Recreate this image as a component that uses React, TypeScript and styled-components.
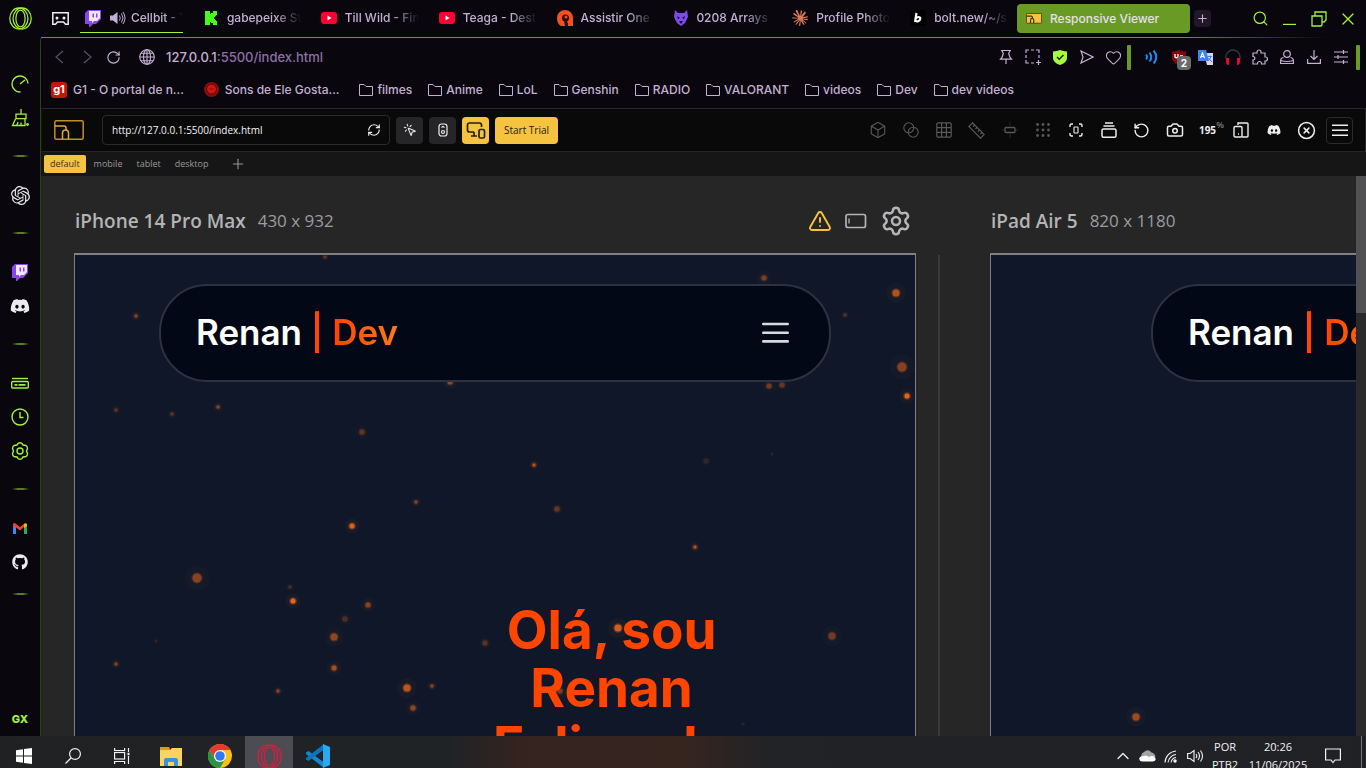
import React from "react";
import styled, { createGlobalStyle, css } from "styled-components";
import {
  Search, X, Plus, RotateCw, Heart,
  RefreshCw, MousePointerClick, Box, RotateCcw, Camera, CircleX, TriangleAlert, Settings,
  ChevronUp,
} from "lucide-react";
import { FaDiscord, FaGithub } from "react-icons/fa6";
import { SiOpenai, SiClaude } from "react-icons/si";

const ui = `Inter, "Liberation Sans", sans-serif`;
const segoe = `"Open Sans", "Noto Sans", sans-serif`;
const c = {
  chrome: "#09070d",
  green: "#6a9a26",
  lime: "#a3f13b",
  lilac: "#c4b0d4",
  dim: "#5a5162",
  yellow: "#f5c33f",
  canvas: "#262627",
  orange: "#ff4500",
};

const Global = createGlobalStyle`
  *, *::before, *::after { box-sizing: border-box; }
  body { margin: 0; background: ${c.chrome}; overflow: hidden; }
  button { font: inherit; color: inherit; background: none; border: 0; padding: 0; }
  svg { display: block; flex: none; }
`;

const Desktop = styled.div`
  height: 100vh;
  display: flex;
  flex-direction: column;
  overflow: hidden;
  background: ${c.chrome};
  color: ${c.lilac};
  font-family: ${ui};
  font-size: 12px;
  font-weight: 500;
`;

/* ---------- title bar ---------- */
const TitleBar = styled.header`
  flex: none;
  height: 37px;
  display: flex;
  align-items: center;
`;
const Square = styled.button<{ $w?: number; $h?: number }>`
  flex: none;
  width: ${(p) => p.$w ?? 27}px;
  height: ${(p) => p.$h ?? 27}px;
  display: flex;
  align-items: center;
  justify-content: center;
`;
const TabStrip = styled.nav`
  flex: 1;
  min-width: 0;
  height: 37px;
  display: flex;
`;
const Tab = styled.button<{ $current?: boolean }>`
  flex: 1 1 0;
  min-width: 0;
  height: 33px;
  margin-right: 9px;
  padding: 4px 0 0 ${(p) => (p.$current ? 5 : 11)}px;
  display: flex;
  align-items: center;
  gap: 8px;
  border-bottom: 1px solid ${(p) => (p.$current ? c.lime : "transparent")};
  svg + svg { margin-left: 1px; margin-right: -3px; }
`;
const TabTitle = styled.span`
  flex: 1;
  min-width: 0;
  overflow: hidden;
  white-space: nowrap;
  text-align: left;
  line-height: 20px;
  mask-image: linear-gradient(90deg, #000 65%, transparent 100%);
`;
const ActiveTab = styled.button`
  flex: none;
  width: 173px;
  height: 29px;
  padding-left: 9px;
  display: flex;
  align-items: center;
  gap: 8px;
  border-radius: 4px;
  background: ${c.green};
  color: #e6e0ea;
`;
const NewTab = styled(Square)`
  margin: 0 35px 0 4px;
  border-radius: 4px;
  background: #221629;
`;
const WindowButtons = styled.div`
  display: flex;
  color: ${c.lime};
  padding-right: 4px;
`;

/* ---------- frame ---------- */
const Body = styled.div`
  flex: 1;
  min-height: 0;
  display: flex;
`;
const Sidebar = styled.aside`
  flex: none;
  width: 40px;
  padding-top: 30px;
  display: flex;
  flex-direction: column;
  align-items: center;
  color: ${c.lime};
`;
const SideSeparator = styled.hr<{ $last?: boolean }>`
  flex: none;
  width: 17px;
  height: 2px;
  margin: ${(p) => (p.$last ? 14 : 20)}px 0 21px;
  border: 0;
  background: linear-gradient(90deg, transparent, #587f22 35%, #587f22 65%, transparent);
`;
const GxMark = styled(Square)`
  margin-top: auto;
  font-size: 11px;
  font-weight: 800;
`;
const Window = styled.main`
  flex: 1;
  min-width: 0;
  display: flex;
  flex-direction: column;
  position: relative;
  border-left: 1px solid #2c4018;
  border-top-left-radius: 4px;
  &::before {
    content: "";
    flex: none;
    height: 1px;
    background: linear-gradient(90deg, ${c.green} 86%, transparent 97%);
  }
`;
const AddressRow = styled.div`
  flex: none;
  height: 38px;
  display: flex;
  align-items: center;
  padding: 0 6px 0 5px;
`;
const Address = styled.button`
  flex: 1;
  min-width: 0;
  display: flex;
  align-items: center;
  gap: 11px;
  padding-left: 12px;
  font-size: 13px;
  line-height: 20px;
  text-align: left;
  span span { color: #8d6fa8; }
`;
const GreenBar = styled.i`
  flex: none;
  width: 4px;
  height: 25px;
  margin-right: 7px;
  border-radius: 1px;
  background: ${c.green};
  &:last-child { margin: 0 0 0 2px; }
`;
const WithBadge = styled(Square)`
  position: relative;
`;
const Badge = styled.span`
  position: absolute;
  right: 1px;
  bottom: 1px;
  width: 14px;
  height: 14px;
  border-radius: 4px;
  background: #6a6a6c;
  color: #fff;
  font-size: 10px;
  font-weight: 700;
  line-height: 14px;
  text-align: center;
`;
const Bookmarks = styled.nav`
  flex: none;
  height: 32px;
  padding: 0 0 5px 10px;
  display: flex;
  align-items: center;
  gap: 16px;
  overflow: hidden;
`;
const Bookmark = styled.a<{ $site?: boolean }>`
  display: flex;
  align-items: center;
  gap: 4px;
  line-height: 20px;
  white-space: nowrap;
  color: inherit;
  text-decoration: none;
  ${(p) => p.$site && css`gap: 6px; margin-right: 4px;`}
`;
const G1 = styled.span`
  width: 16px;
  height: 16px;
  border-radius: 3px;
  background: #c4170c;
  color: #fff;
  font-size: 11px;
  font-weight: 700;
  line-height: 15px;
  text-align: center;
`;

/* ---------- viewer extension ---------- */
const ViewerBar = styled.div`
  flex: none;
  height: 44px;
  padding: 0 12px 0 12px;
  display: flex;
  align-items: center;
  gap: 6px;
  border: 1px solid #262627;
  border-left-color: #131313;
  background: #09090a;
  color: #ededee;
  font-family: ${segoe};
`;
const UrlBox = styled.label`
  width: 288px;
  height: 30px;
  margin-left: 12px;
  padding: 0 8px 0 9px;
  display: flex;
  align-items: center;
  border: 1px solid #2a2a2c;
  border-radius: 4px;
`;
const UrlInput = styled.input`
  flex: 1;
  min-width: 0;
  padding: 0;
  border: 0;
  outline: 0;
  background: none;
  color: #f4f4f5;
  font: 500 10px/16px ${segoe};
`;
const Tool = styled(Square)<{ $tone?: "grey" | "yellow" | "line"; $dim?: boolean }>`
  border-radius: 4px;
  color: ${(p) => (p.$dim ? "#58585a" : "#ededee")};
  ${(p) => p.$tone === "grey" && css`background: #262628;`}
  ${(p) => p.$tone === "yellow" && css`background: ${c.yellow}; color: #26221a;`}
  ${(p) => p.$tone === "line" && css`border: 1px solid #2a2a2c;`}
`;
const Trial = styled(Tool)`
  font-size: 10px;
  font-weight: 500;
`;
const Tools = styled.div`
  margin-left: auto;
  display: flex;
  gap: 6px;
`;
const Zoom = styled(Tool)`
  font-size: 10px;
  font-weight: 700;
  sup {
    width: 8px;
    margin: 3px -8px 0 0;
    align-self: flex-start;
    font-size: 9px;
    line-height: 9px;
    font-weight: 600;
    color: #7a7a7c;
  }
`;
const Presets = styled.nav`
  flex: none;
  height: 24px;
  padding: 0 0 0 3px;
  display: flex;
  align-items: center;
  gap: 2px;
  background: #161617;
  color: #98989b;
  font: 500 9px/18px ${segoe};
`;
const Preset = styled.button<{ $on?: boolean }>`
  height: 18px;
  padding: 0 6px;
  border-radius: 2px;
  ${(p) => p.$on && css`background: ${c.yellow}; color: #3a3220;`}
`;
const AddPreset = styled(Preset)`
  padding-left: 14px;
`;
const Stage = styled.div`
  flex: 1;
  min-height: 0;
  display: flex;
  background: ${c.canvas};
`;
const Devices = styled.div`
  flex: 1;
  min-width: 0;
  display: flex;
  padding-left: 33px;
  overflow: hidden;
`;
const ScrollTrack = styled.div`
  flex: none;
  width: 10px;
  background: #2a2a2b;
  &::before {
    content: "";
    display: block;
    height: 137px;
    background: #515153;
  }
`;
const Divider = styled.div`
  flex: none;
  width: 2px;
  margin: 79px 50px 0 22px;
  background: #3a3a3c;
`;
const Device = styled.section<{ $w: number }>`
  flex: none;
  width: ${(p) => p.$w}px;
  display: flex;
  flex-direction: column;
`;
const DeviceHead = styled.div`
  flex: none;
  height: 77px;
  padding: 12px 4px 0 1px;
  display: flex;
  align-items: center;
  gap: 12px;
  color: #b4b4b6;
  font-family: ${segoe};
`;
const DeviceName = styled.h2`
  margin: 0;
  font-size: 19px;
  line-height: 28px;
  font-weight: 600;
`;
const DeviceSize = styled.span`
  flex: 1;
  font-size: 17px;
  line-height: 28px;
  font-weight: 400;
  color: #9c9ca0;
`;
const HeadIcons = styled.div`
  display: flex;
  align-items: center;
  gap: 13px;
`;
const Screen = styled.div`
  flex: 1;
  min-height: 0;
  position: relative;
  border: 1px solid #808082;
  border-top-width: 2px;
  border-bottom: 0;
  background: #0f1729;
  overflow: hidden;
  font-family: ${ui};
`;
const Sparks = styled.svg`
  position: absolute;
  left: 0;
  top: 0;
  width: 100%;
  height: 100%;
`;
const SiteHeader = styled.header`
  position: relative;
  margin: 29px 10% 0;
  height: 98px;
  padding: 0 40px 2px 35px;
  display: flex;
  align-items: center;
  justify-content: space-between;
  border: 2px solid #2e3140;
  border-radius: 48px;
  background: #030817;
`;
const Brand = styled.a`
  font-size: 35px;
  line-height: 44px;
  font-weight: 600;
  color: #fff;
  text-decoration: none;
  white-space: nowrap;
  span {
    color: transparent;
    background: linear-gradient(90deg, ${c.orange} 30%, #ff7a1a);
    background-clip: text;
  }
`;
const Hero = styled.h1`
  position: relative;
  margin: 219px 0 0;
  padding: 0 2px 0 28%;
  color: ${c.orange};
  font-size: 53px;
  line-height: 58px;
  font-weight: 700;
  text-align: center;
  span { display: block; }
`;

/* ---------- taskbar ---------- */
const Taskbar = styled.footer`
  flex: none;
  height: 32px;
  display: flex;
  align-items: flex-start;
  overflow: hidden;
  background: linear-gradient(90deg, #202123 0, #202326 33%, #34231f 38%, #36241f 50%, #222326 56%, #202125 100%);
  color: #f2f2f2;
  font: 12px/18px ${segoe};
`;
const TaskButton = styled(Square)<{ $on?: boolean }>`
  margin-right: 1px;
  background: ${(p) => (p.$on ? "#4c4d52" : "none")};
`;
const Tray = styled.div`
  margin-left: auto;
  height: 40px;
  display: flex;
  align-items: center;
`;
const TrayText = styled.div<{ $w: number }>`
  width: ${(p) => p.$w}px;
  font-size: 11px;
  text-align: center;
  div { height: 18px; }
`;
const ShowDesktop = styled.i`
  width: 5px;
  height: 40px;
  margin-left: 8px;
  border-left: 1px solid #77787a;
`;

/* ---------- drawings ---------- */
type LineProps = { s?: number; h?: number; vb?: string; sw?: number; children: React.ReactNode };
const Line = ({ s = 18, h, vb = "0 0 18 18", sw = 1, children }: LineProps) => (
  <svg width={s} height={h ?? s} viewBox={vb} fill="none" stroke="currentColor" strokeWidth={sw} aria-hidden>
    {children}
  </svg>
);
const OperaRing = ({ s, color, sw }: { s: number; color: string; sw: number }) => (
  <svg width={s} height={s} viewBox="0 0 24 24" fill="none" stroke={color} strokeWidth={sw} aria-hidden>
    <ellipse cx="10.300" cy="12" rx="9.500" ry="11" />
    <ellipse cx="13.700" cy="12" rx="9.500" ry="11" />
    <ellipse cx="12" cy="12" rx="4.800" ry="8.800" />
  </svg>
);
const TwitchLogo = () => (
  <svg width="16" height="18" viewBox="0 0 16 18" aria-hidden>
    <path d="M3 1h13v9l-5 5H8l-3 3H4v-3H0V4z" fill="#8b45f0" />
    <path d="M4 2h11v7l-3 3H9l-2 2v-2H4z" fill="#efe8f8" />
    <path d="M7.500 4.500h1.500v4H7.500zM11 4.500h1.500v4H11z" fill="#8b45f0" />
  </svg>
);
const YouTubeLogo = () => (
  <svg width="16" height="16" viewBox="0 0 16 16" aria-hidden>
    <rect y="2" width="16" height="12" rx="3" fill="#ff0033" />
    <path d="M6.500 5.500v5l4-2.500z" fill="#fff" />
  </svg>
);
const KickLogo = () => (
  <svg width="16" height="16" viewBox="0 0 16 16" aria-hidden>
    <rect width="16" height="16" fill="#080b08" />
    <path d="M2 1h5v3h1V3h2V1h4v4h-1v1h-1v1h-1v2h1v1h1v1h1v4h-4v-2H8v-1H7v3H2z" fill="#45fc16" />
  </svg>
);
const AnimeLogo = () => (
  <svg width="16" height="16" viewBox="0 0 16 16" aria-hidden>
    <path d="M0 8a8 8 0 0 1 16 0v8h-5v-3a6 6 0 0 1-8 2.500C1 14 0 11 0 8z" fill="#f4511e" />
    <circle cx="8.500" cy="8" r="3.500" fill="#2b0d06" />
    <circle cx="9" cy="7" r="1.500" fill="#f4511e" />
    <path d="M7 10l3 0 1 6H8z" fill="#2b0d06" />
  </svg>
);
const CatLogo = () => (
  <svg width="14" height="16" viewBox="0 0 14 16" aria-hidden>
    <path d="M1 0l3 3h6l3-3 1 7-3 6-4 3-4-3-3-6z" fill="#7c4be8" />
    <path d="M3 6l3 2-2 1zM11 6L8 8l2 1zM5 11h4l-2 3z" fill="#160b2c" />
  </svg>
);
const BoltLogo = () => (
  <svg width="16" height="16" viewBox="0 0 16 16" aria-hidden>
    <rect width="16" height="16" rx="3" fill="#000" />
    <path d="M6.500 3L5 12M6 8.500c1-2 4.500-2 4.300 0-.2 3-3.800 3.500-5 2" stroke="#fff" strokeWidth="2.200" fill="none" />
  </svg>
);
const ViewerLogo = ({ w, solid }: { w: number; solid?: boolean }) => (
  <svg width={w} height={(w * 2) / 3} viewBox="0 0 30 20" aria-hidden>
    <rect x=".8" y=".8" width="28.400" height="18.400" rx="1.500" fill={solid ? c.yellow : "none"} stroke={solid ? "#3f350f" : "#c08f2a"} strokeWidth="1.500" />
    <path d="M1 6h9q2 0 2 2v2M8.500 19v-6q0-3 3-3t3 3v6" fill="none" stroke={solid ? "#3f350f" : "#e0a92f"} strokeWidth={solid ? 2.2 : 1.5} />
  </svg>
);
const Folder = () => (
  <Line s={14} vb="0 0 14 14" sw={1}>
    <path d="M.5 12.500V1.500h4.500l2 2h6.500v9z" />
  </Line>
);
const Speaker = () => (
  <svg width="16" height="14" viewBox="0 0 16 14" aria-hidden>
    <path d="M0 4.500h3L7.500 1v12L3 9.500H0z" fill={c.lilac} />
    <path d="M9.500 4.500q1.500 2.500 0 5M11.500 2.500q3 4.500 0 9M13 1q4 6 0 12" fill="none" stroke={c.lilac} />
  </svg>
);

type Dot = [number, number, number, number];
const phoneDots: Dot[] = [
  [250, 2, 2, 0.4], [689, 23, 3, 0.5], [821, 38, 4, 0.75], [770, 60, 2, 0.35], [61, 61, 2, 0.6], [827, 112, 5, 0.55],
  [832, 141, 3, 1], [694, 131, 3, 0.45], [707, 130, 3, 0.4], [375, 127, 3, 0.6], [41, 155, 2, 0.4], [97, 159, 2, 0.4],
  [143, 152, 2, 0.6], [287, 177, 3, 0.4], [631, 206, 3, 0.18], [697, 199, 1, 0.3], [459, 210, 2, 0.8], [341, 247, 2, 0.6],
  [482, 254, 3, 0.4], [277, 271, 3, 0.95], [620, 292, 2, 0.8], [122, 323, 5, 0.55], [215, 332, 2, 0.3], [218, 346, 3, 1],
  [293, 350, 3, 0.55], [270, 364, 3, 0.3], [259, 382, 4, 0.6], [81, 386, 1, 0.3], [41, 409, 2, 0.55], [259, 413, 3, 0.7],
  [203, 436, 2, 0.6], [410, 388, 3, 0.35], [332, 433, 4, 0.8], [357, 431, 2, 0.6], [338, 453, 3, 0.6], [543, 373, 4, 0.9],
  [485, 436, 3, 0.5], [757, 381, 4, 0.45], [668, 469, 1, 0.3],
];
const padDots: Dot[] = [[145, 462, 4, 0.65]];
const SparkField = ({ dots }: { dots: Dot[] }) => (
  <Sparks aria-hidden>
    {dots.map(([x, y, r, o]) => (
      <g key={`${x}-${y}`} fill="#ff6f1a" opacity={o}>
        <circle cx={x} cy={y} r={r * 2.5} opacity=".05" />
        <circle cx={x} cy={y} r={r + 0.8} opacity=".3" />
        <circle cx={x} cy={y} r={r - 0.5} opacity=".85" />
      </g>
    ))}
  </Sparks>
);

const tabs: [React.ReactNode, string][] = [
  [<KickLogo />, "gabepeixe Stream"],
  [<YouTubeLogo />, "Till Wild - Final"],
  [<YouTubeLogo />, "Teaga - Destino"],
  [<AnimeLogo />, "Assistir One"],
  [<CatLogo />, "0208 Arrays"],
  [<SiClaude size={16} color="#d97757" />, "Profile Photo"],
  [<BoltLogo />, "bolt.new/~/sb1"],
];
const folders = ["filmes", "Anime", "LoL", "Genshin", "RADIO", "VALORANT", "videos", "Dev", "dev videos"];

export default function App() {
  return (
    <Desktop>
      <Global />
      <TitleBar>
        <Square $w={40} aria-label="Opera menu"><OperaRing s={23} color={c.lime} sw={1.3} /></Square>
        <Square $w={40} aria-label="Workspace">
          <svg width="17" height="13" viewBox="0 0 17 13" aria-hidden>
            <path d="M.8.800h15.400v11.400h-2.700L11.500 10h-6l-2 2.200H.8z" fill="none" stroke="#f0eef2" strokeWidth="1.500" />
            <circle cx="5" cy="6" r="1.500" fill="#f0eef2" /><circle cx="12" cy="6" r="1.500" fill="#f0eef2" />
          </svg>
        </Square>
        <TabStrip>
          <Tab $current><TwitchLogo /><Speaker /><TabTitle>Cellbit - Twitch</TabTitle></Tab>
          {tabs.map(([icon, title]) => <Tab key={title}>{icon}<TabTitle>{title}</TabTitle></Tab>)}
        </TabStrip>
        <ActiveTab><ViewerLogo w={16} solid />Responsive Viewer</ActiveTab>
        <NewTab $w={17} $h={17} aria-label="New tab"><Plus size={13} strokeWidth={2} /></NewTab>
        <WindowButtons>
          <Square $w={29} aria-label="Search tabs"><Search size={17} strokeWidth={1.7} /></Square>
          <Square $w={29} aria-label="Minimize"><Line s={13} vb="0 0 13 13" sw={1.2}><path d="M0 12.400h13" /></Line></Square>
          <Square $w={29} aria-label="Restore">
            <Line s={16} vb="0 0 16 16" sw={1.3}><path d="M1 5h10v9l-1 1H1zM4 5V1h11v8l-2 2h-2" /></Line>
          </Square>
          <Square $w={29} aria-label="Close"><X size={20} strokeWidth={1.6} /></Square>
        </WindowButtons>
      </TitleBar>

      <Body>
        <Sidebar>
          <Square $h={34} aria-label="Speed">
            <Line sw={1.4}><path d="M9.500 17A8 8 0 1 1 17 8.500M9 9l5-4" /></Line>
          </Square>
          <Square $h={34} aria-label="Cleaner">
            <Line sw={1.3}><path d="M10 0v5M5 5.200h10v4.500H5zM4.500 10L1.500 16.500H14V10M6 16l1-3M10 16v-2.500" /><circle cx="16.500" cy="15.500" r=".8" /></Line>
          </Square>
          <SideSeparator />
          <Square $h={34} aria-label="ChatGPT"><SiOpenai size={19} color="#e8e8ea" /></Square>
          <SideSeparator />
          <Square $h={34} aria-label="Twitch"><TwitchLogo /></Square>
          <Square $h={34} aria-label="Discord"><FaDiscord size={20} color="#ececee" /></Square>
          <SideSeparator />
          <Square $h={34} aria-label="Player">
            <Line sw={1.4}><path d="M1 4.500h16" /><rect x=".7" y="7.500" width="16.600" height="6.500" rx="1" /><path d="M3.500 10.800h3M7.500 10.800h7" strokeWidth="1.800" /></Line>
          </Square>
          <Square $h={34} aria-label="History">
            <Line sw={1.4}><circle cx="9" cy="9" r="8" /><path d="M9 4v5.500h3.500" /></Line>
          </Square>
          <Square $h={34} aria-label="Settings">
            <Line sw={1.4}><path d="M7 1.500q2-1.500 4 0l1 1.500 3 .5q1.500 1 1.500 3L15.500 9l1 2.500q0 2-1.500 3l-3 .5-1 1.500q-2 1.500-4 0L6 15l-3-.5q-1.500-1-1.500-3L2.500 9l-1-2.500q0-2 1.500-3L6 3z" /><circle cx="9" cy="9" r="3" /></Line>
          </Square>
          <SideSeparator />
          <Square $h={34} aria-label="Gmail">
            <svg width="14" height="11" viewBox="0 0 14 11" aria-hidden>
              <path d="M0 1.500h3V11H0z" fill="#4285f4" /><path d="M11 1.500h3V11h-3z" fill="#34a853" />
              <path d="M0 3V1q1-1.500 2.500-.5L7 4l4.500-3.500v3L7 7.500 3 4.500z" fill="#ea4335" /><path d="M11 1q2-1.500 3 .5V3l-3 2z" fill="#fbbc04" />
            </svg>
          </Square>
          <Square $h={34} aria-label="GitHub"><FaGithub size={16} color="#ececee" /></Square>
          <SideSeparator $last />
          <GxMark $h={34}>GX</GxMark>
        </Sidebar>

        <Window>
          <AddressRow>
            <Square aria-label="Back"><Line s={14} vb="0 0 14 14" sw={1.2}><path d="M10 1L3 7l7 6" stroke={c.dim} /></Line></Square>
            <Square aria-label="Forward"><Line s={14} vb="0 0 14 14" sw={1.2}><path d="M4 1l7 6-7 6" stroke={c.dim} /></Line></Square>
            <Square aria-label="Reload"><RotateCw size={15} strokeWidth={1.8} /></Square>
            <Address>
              <Line s={16} vb="0 0 16 16" sw={1.1}><circle cx="8" cy="8" r="7.300" /><ellipse cx="8" cy="8" rx="3.500" ry="7.300" /><path d="M8 .7v14.600M.7 8h14.600M2 4.300h12M2 11.700h12" /></Line>
              <span>127.0.0.1<span>:5500/index.html</span></span>
            </Address>
            <Square aria-label="Pin"><Line s={16} vb="0 0 16 16" sw={1.2}><path d="M3 1.500h10M4 1.500l1.300 3L4 8.500l-1.500 1.700h11L12 8.500l-1.300-4 1.300-3M8 10v5" /></Line></Square>
            <Square aria-label="Snapshot"><Line s={16} vb="0 0 16 16" sw={1.2}><path d="M1 4V1h3M6 1h3M11 1h3v3M14 6v3M1 6v3M1 11v3h3M6 14h3M13.500 11v5M11 13.500h5" /></Line></Square>
            <Square aria-label="Ad blocker">
              <svg width="14" height="15" viewBox="0 0 14 15" aria-hidden><path d="M0 1.500Q4 1 7 0q3 1 7 1.500V8q0 4.500-7 7Q0 12.500 0 8z" fill="#a6f93c" /><path d="M4 7l2.200 2.200L10.500 5" fill="none" stroke="#1a2a08" strokeWidth="1.500" /></svg>
            </Square>
            <Square aria-label="Send"><Line s={14} vb="0 0 14 14" sw={1.2}><path d="M1 1l12 6-12 6 2-6z" /></Line></Square>
            <Square aria-label="Favourite"><Heart size={17} strokeWidth={1.5} /></Square>
            <GreenBar />
            <Square aria-label="Volume booster">
              <Line s={14} vb="0 0 14 14" sw={2}><g stroke="#1a8cf0"><path d="M1 4.500q2 2.500 0 5M4.500 2.500q3.500 4.500 0 9M8.500.5q5.500 6.500 0 13" /></g></Line>
            </Square>
            <WithBadge aria-label="uBlock Origin">
              <svg width="14" height="15" viewBox="0 0 14 15" aria-hidden><path d="M0 1.500Q4 1.500 7 0q3 1.500 7 1.500V8q0 4.500-7 7Q0 12.500 0 8z" fill="#800610" /><path d="M3 4v3q1.500 1.500 3 0V4M8 6h3" fill="none" stroke="#fff" strokeWidth="1.300" /></svg>
              <Badge>2</Badge>
            </WithBadge>
            <Square aria-label="Translate">
              <svg width="15" height="15" viewBox="0 0 15 15" aria-hidden><path d="M6 3h9v12h-6z" fill="#d8dade" /><path d="M0 0h8l3 11H0z" fill="#3f83ee" /><path d="M2.500 8L4.500 3l2 5M3.300 6.500h2.500" stroke="#fff" strokeWidth="1.200" fill="none" /><path d="M9.500 6.500h4.500M12 5.500v1M13 6.500q-1 3-3 4M10.500 8l3.500 4" stroke="#3f83ee" fill="none" /></svg>
            </Square>
            <Square aria-label="Headphones">
              <svg width="16" height="17" viewBox="0 0 16 17" aria-hidden><path d="M1 10V8a7 7 0 0 1 14 0v2" fill="none" stroke="#2c3b44" strokeWidth="1.400" /><path d="M1 9h3v7H3q-2-1-2-3zM12 9h3v4q0 2-2 3h-1z" fill="#f0052f" /></svg>
            </Square>
            <Square aria-label="Extensions"><Line s={16} vb="0 0 16 16" sw={1.2}><path d="M1 4h4V3a2 2 0 0 1 4 0v1h4v4h.500a2 2 0 0 1 0 4H13v3H9.500v-.500a1.500 1.500 0 0 0-4 0v.500H1v-4h.500a1.800 1.800 0 0 0 0-3.500H1z" /></Line></Square>
            <Square aria-label="Profile"><Line s={14} vb="0 0 14 14" sw={1.2}><circle cx="7" cy="4" r="3.300" /><path d="M3.500 7.500Q.6 8 .6 10.500v3h12.800v-3q0-2.500-2.900-3M.6 10.500q6.400 2 12.800 0" /></Line></Square>
            <Square aria-label="Downloads"><Line s={14} vb="0 0 14 14" sw={1.2}><path d="M7 0v9M3.500 6L7 9.500 10.500 6M.6 9v4.400h12.800V9" /></Line></Square>
            <Square aria-label="Easy setup"><Line s={14} vb="0 0 14 14" sw={1.2}><path d="M0 2h14M0 7h14M0 12h14M9.500 0v4M4 5v4M9.500 10v4" /></Line></Square>
            <GreenBar />
          </AddressRow>
          <Bookmarks>
            <Bookmark $site href="#g1"><G1>g1</G1>G1 - O portal de n...</Bookmark>
            <Bookmark $site href="#sons">
              <svg width="15" height="15" viewBox="0 0 15 15" aria-hidden><circle cx="7.500" cy="7.500" r="7.500" fill="#8e0c0e" /><circle cx="7.500" cy="7" r="5" fill="#d11417" stroke="#5d0708" /><path d="M5 7h5" stroke="#8e0c0e" /></svg>
              Sons de Ele Gosta...
            </Bookmark>
            {folders.map((f) => <Bookmark key={f} href={`#${f}`}><Folder />{f}</Bookmark>)}
          </Bookmarks>

          <ViewerBar>
            <ViewerLogo w={30} />
            <UrlBox>
              <UrlInput aria-label="Page address" defaultValue="http://127.0.0.1:5500/index.html" />
              <RefreshCw size={14} strokeWidth={2} />
            </UrlBox>
            <Tool $tone="grey" aria-label="Click mode"><MousePointerClick size={14} strokeWidth={1.8} /></Tool>
            <Tool $tone="grey" aria-label="Scroll sync"><Line s={14} vb="0 0 14 14" sw={1.2}><rect x="3" y="1" width="8" height="12" rx="2.500" /><circle cx="7" cy="9" r="1.500" /><path d="M5.500 4.500L7 3.500l1.500 1" /></Line></Tool>
            <Tool $tone="yellow" aria-label="Devices"><Line s={20} vb="0 0 20 20" sw={1.7}><path d="M8 12H3.500Q1.500 12 1.500 10V5q0-2 2-2h10q2 0 2 2v2M8 12v4M5 16h6" /><rect x="13" y="9.500" width="5.500" height="8.500" rx="1.500" /></Line></Tool>
            <Trial $tone="yellow" $w={63}>Start Trial</Trial>
            <Tools>
              <Tool $dim aria-label="3D view"><Box size={18} strokeWidth={1.5} /></Tool>
              <Tool $dim aria-label="Overlap"><Line s={16} vb="0 0 16 16" sw={1.1}><circle cx="5.800" cy="5.800" r="5" /><circle cx="10.200" cy="10.200" r="5" /></Line></Tool>
              <Tool $dim aria-label="Grid"><Line s={16} vb="0 0 16 16" sw={1.2}><rect x=".8" y=".8" width="14.400" height="14.400" rx="1.500" /><path d="M5.600 1v14M10.400 1v14M1 5.600h14M1 10.400h14" /></Line></Tool>
              <Tool $dim aria-label="Ruler"><Line s={17} vb="0 0 17 17" sw={1.2}><path d="M4.500.8L.8 4.500l11.700 11.700 3.700-3.700zM6.500 3L5 4.500M9 5.500L7.500 7M11.500 8L10 9.500M14 10.500L12.500 12" /></Line></Tool>
              <Tool $dim aria-label="Guides"><Line s={16} vb="0 0 16 16" sw={1.3}><rect x="3" y="5.500" width="10" height="5" rx="1" /><path d="M8 0v4M8 12v4M0 8h2M14 8h2" opacity=".3" /></Line></Tool>
              <Tool $dim aria-label="Dots">
                <svg width="14" height="14" viewBox="0 0 14 14" fill="#58585a" aria-hidden>{[1.5, 7, 12.5].map((y) => [1.5, 7, 12.5].map((x) => <circle key={`${x}${y}`} cx={x} cy={y} r="1.400" />))}</svg>
              </Tool>
              <Tool aria-label="Fit"><Line s={14} vb="0 0 14 14" sw={1.4}><path d="M1 4V2.500Q1 1 2.500 1H4M10 1h1.500Q13 1 13 2.500V4M13 10v1.500q0 1.500-1.500 1.500H10M4 13H2.500Q1 13 1 11.500V10" /><rect x="5" y="4" width="4" height="6" rx=".5" strokeWidth="1.100" /></Line></Tool>
              <Tool aria-label="Layout"><Line s={16} vb="0 0 16 16" sw={1.5}><path d="M4 1h8M2.500 4h11" /><rect x="1" y="7" width="14" height="8.200" rx="1.500" /></Line></Tool>
              <Tool aria-label="Reset"><RotateCcw size={17} strokeWidth={2} /></Tool>
              <Tool aria-label="Screenshot"><Camera size={18} strokeWidth={2} /></Tool>
              <Zoom aria-label="Zoom">195<sup>%</sup></Zoom>
              <Tool aria-label="Rotate devices"><Line s={16} vb="0 0 16 16" sw={1.4}><path d="M5 3V1h9q1 0 1 1v12q0 1-1 1H9" /><rect x="1" y="4.500" width="8" height="10.500" rx="1.200" /><path d="M5 12h1" /></Line></Tool>
              <Tool aria-label="Discord"><FaDiscord size={14} /></Tool>
              <Tool aria-label="Close viewer"><CircleX size={19} strokeWidth={1.9} /></Tool>
              <Tool $tone="line" aria-label="Menu"><Line s={16} vb="0 0 16 16" sw={1.6}><path d="M0 3.200h16M0 8.200h16M0 13.200h16" /></Line></Tool>
            </Tools>
          </ViewerBar>
          <Presets>
            <Preset $on>default</Preset><Preset>mobile</Preset><Preset>tablet</Preset><Preset>desktop</Preset>
            <AddPreset aria-label="Add preset"><Plus size={16} strokeWidth={1.6} /></AddPreset>
          </Presets>

          <Stage>
            <Devices>
              <Device $w={842}>
                <DeviceHead>
                  <DeviceName>iPhone 14 Pro Max</DeviceName>
                  <DeviceSize>430 x 932</DeviceSize>
                  <HeadIcons>
                    <TriangleAlert size={24} strokeWidth={1.9} color={c.yellow} />
                    <Line s={22} vb="0 0 22 22" sw={1.7}><rect x="1" y="4.500" width="19.500" height="13" rx="2" /><path d="M4 8.500v5" strokeWidth="1.300" /></Line>
                    <Settings size={32} strokeWidth={1.9} />
                  </HeadIcons>
                </DeviceHead>
                <Screen>
                  <SparkField dots={phoneDots} />
                  <SiteHeader>
                    <Brand href="#home">Renan <span>| Dev</span></Brand>
                    <Square aria-label="Menu"><Line s={27} vb="0 0 27 27" sw={2.6}><g stroke="#d9dae0" strokeLinecap="round"><path d="M1.300 5h24.400M1.300 13.700h24.400M1.300 22.400h24.400" /></g></Line></Square>
                  </SiteHeader>
                  <Hero><span>Olá, sou</span><span>Renan</span><span>Felizardo</span></Hero>
                </Screen>
              </Device>
              <Divider />
              <Device $w={1602}>
                <DeviceHead>
                  <DeviceName>iPad Air 5</DeviceName>
                  <DeviceSize>820 x 1180</DeviceSize>
                </DeviceHead>
                <Screen>
                  <SparkField dots={padDots} />
                  <SiteHeader><Brand href="#home">Renan <span>| Dev</span></Brand></SiteHeader>
                </Screen>
              </Device>
            </Devices>
            <ScrollTrack />
          </Stage>
        </Window>
      </Body>

      <Taskbar>
        <TaskButton $w={48} $h={40} aria-label="Start">
          <svg width="16" height="16" viewBox="0 0 16 16" fill="#fff" aria-hidden><path d="M0 2.300l7-1v6.200H0zM8 1.100L16 0v7.500H8zM0 8.500h7v6.200l-7-1zM8 8.500h8V16l-8-1.100z" /></svg>
        </TaskButton>
        <TaskButton $w={48} $h={40} aria-label="Search"><Line s={16} vb="0 0 16 16" sw={1.2}><circle cx="10" cy="6" r="5.400" /><path d="M6 10L.5 15.500" /></Line></TaskButton>
        <TaskButton $w={48} $h={40} aria-label="Task view"><Line s={16} vb="0 0 16 16" sw={1.2}><path d="M.6 0v2.500h10V0M.6 16v-2.500h10V16M14.500 0v4M14.500 8v8" /><rect x=".6" y="4.500" width="10" height="6.500" /><path d="M13.500 6h2" strokeWidth="2.500" /></Line></TaskButton>
        <TaskButton $w={48} $h={40} aria-label="Explorer">
          <svg width="22" height="19" viewBox="0 0 22 19" aria-hidden><path d="M0 0h9l1 2v4H0z" fill="#e09a05" /><path d="M0 3h10l2-2h10v18H0z" fill="#ffd35c" /><path d="M4 19v-6q0-2 2-2h10q2 0 2 2v6h-4v-4H8v4z" fill="#3a94dd" /></svg>
        </TaskButton>
        <TaskButton $w={48} $h={40} aria-label="Chrome">
          <svg width="24" height="24" viewBox="0 0 24 24" aria-hidden><circle cx="12" cy="12" r="12" fill="#fbc116" /><path d="M1.600 6A12 12 0 0 1 22.400 6H12L6.800 15z" fill="#e53a2e" /><path d="M1.600 6A12 12 0 0 0 12 24l5.200-9H6.800z" fill="#269547" /><circle cx="12" cy="12" r="6" fill="#fff" /><circle cx="12" cy="12" r="4.800" fill="#2d7af0" /></svg>
        </TaskButton>
        <TaskButton $w={48} $h={40} $on aria-label="Opera GX"><OperaRing s={25} color="#e8163f" sw={1.1} /></TaskButton>
        <TaskButton $w={48} $h={40} aria-label="Visual Studio Code">
          <svg width="24" height="24" viewBox="0 0 24 24" aria-hidden><path d="M0 8.500L2.500 7 18 18.500V24L0 10z" fill="#1287cf" /><path d="M0 15.500L2.500 17 18 5.500V0L0 14z" fill="#0a74bd" /><path d="M17 0l7 3v18l-7 3z" fill="#29a9f2" /></svg>
        </TaskButton>
        <Tray>
          <Square $w={24} aria-label="Hidden icons"><ChevronUp size={20} strokeWidth={1.5} /></Square>
          <Square $w={24} aria-label="OneDrive">
            <svg width="17" height="12" viewBox="0 0 17 12" aria-hidden><path d="M3 8a4 4 0 0 1 2-6q4-3.500 7.500.5Q16 3 16.500 7L9 8z" fill="#a2a2a4" /><path d="M3 11.500Q0 11 .3 8.500.8 6 4 6q4-1.500 6 1 4-2 6 .5 2 3.500-2 4z" fill="#fff" /></svg>
          </Square>
          <Square $w={24} aria-label="Network"><Line s={14} vb="0 0 14 14" sw={1.1}><path d="M1 13.500A12 12 0 0 1 12 2M4 13.500a9 9 0 0 1 8-8M7 13.500a6 6 0 0 1 5-5" /><circle cx="11" cy="12" r="1.200" fill="currentColor" /></Line></Square>
          <Square $w={24} aria-label="Volume"><Line s={17} h={14} vb="0 0 17 14" sw={1.1}><path d="M.6 4.500h2.500L7 1.500v11L3.100 9.500H.6zM9 5q1.500 2 0 4M11 3q3 4 0 8M13.500 1.500q4 5.500 0 11" /></Line></Square>
          <TrayText $w={36}><div>POR</div><div>PTB2</div></TrayText>
          <TrayText $w={70}><div>20:26</div><div>11/06/2025</div></TrayText>
          <Square $w={40} aria-label="Notifications"><Line s={16} vb="0 0 16 16" sw={1.2}><path d="M.6 1h14.800v11H10l-2 2.500L6 12H.6z" /></Line></Square>
          <ShowDesktop />
        </Tray>
      </Taskbar>
    </Desktop>
  );
}
